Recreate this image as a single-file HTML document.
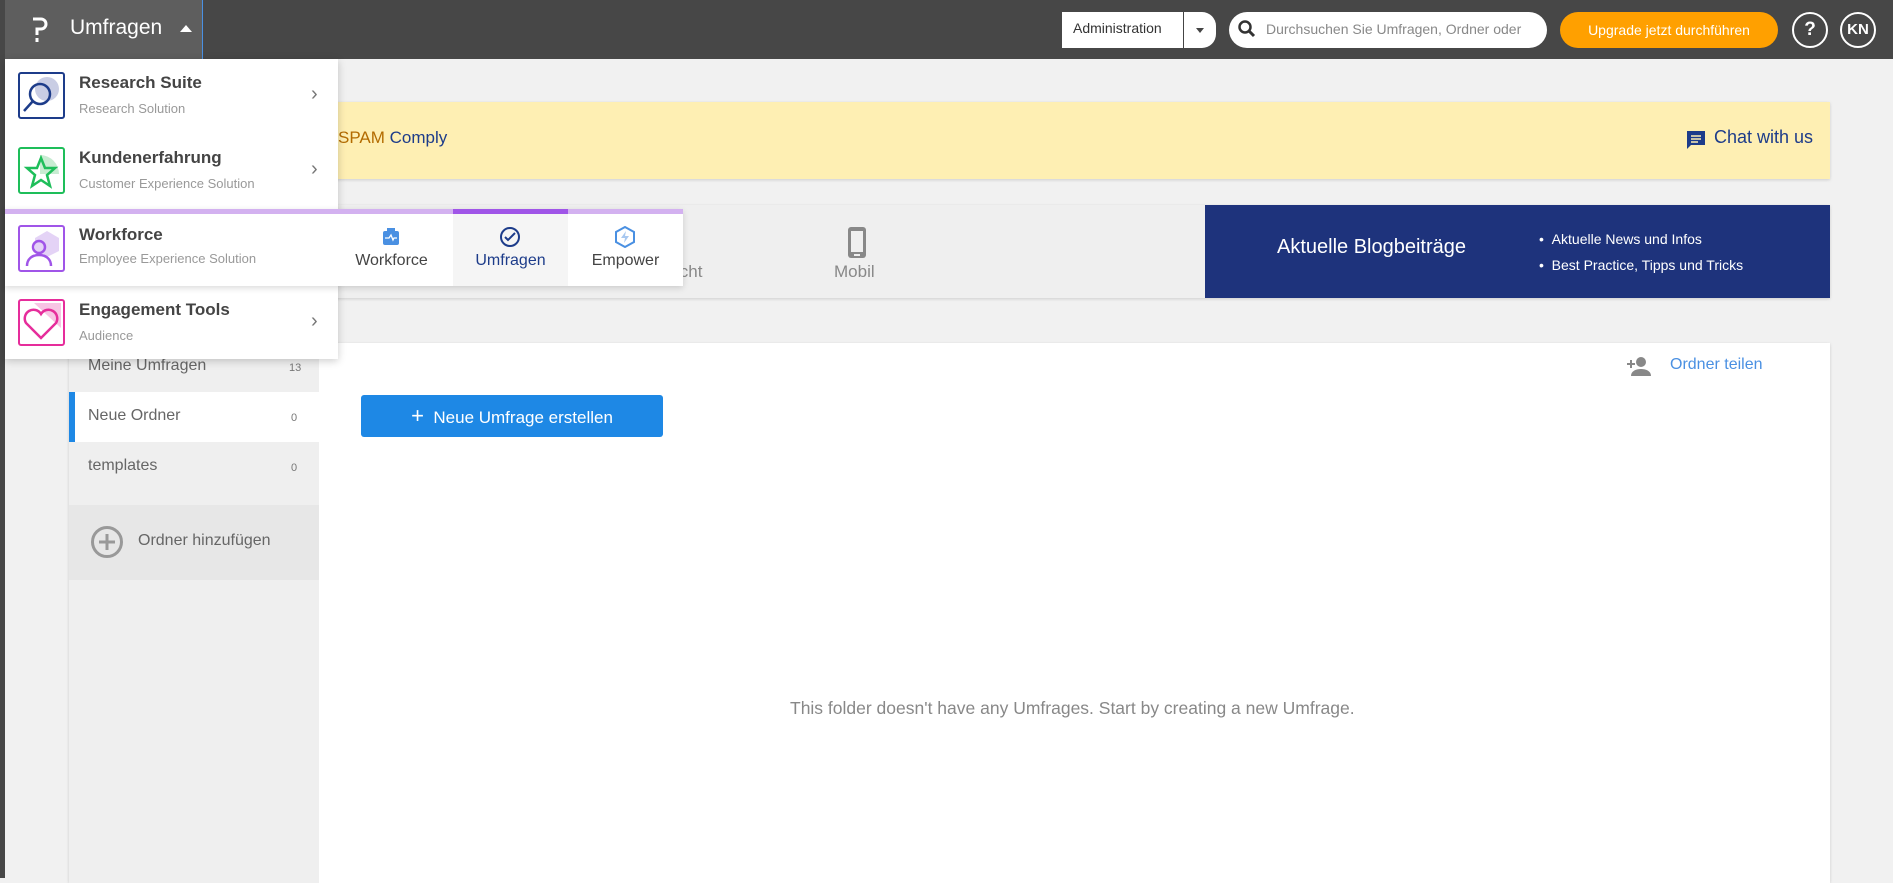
<!DOCTYPE html>
<html><head><meta charset="utf-8"><style>
*{box-sizing:border-box;margin:0;padding:0}
body{width:1893px;height:878px;overflow:hidden;background:#f1f1f1;font-family:"Liberation Sans",sans-serif;position:relative;color:#555}
.abs{position:absolute}
.top{left:0;top:0;width:1893px;height:59px;background:#474747}
.menu{left:5px;top:59px;width:333px;height:300px;background:#fff;box-shadow:0 2px 8px rgba(0,0,0,.2)}
.item{position:absolute;left:0;width:333px;height:75px}
.ic{position:absolute;left:13px;top:13px;width:47px;height:47px;border:2px solid;border-radius:3px}
.t1{position:absolute;left:74px;top:14px;font-size:17px;font-weight:bold;color:#444}
.t2{position:absolute;left:74px;top:42px;font-size:13px;color:#999}
.chev{position:absolute;left:306px;top:24px;font-size:20px;color:#777}
.st{position:absolute;top:43px;font-size:16px;text-align:center}
</style></head><body>
<div class="abs" style="left:0;top:0;width:5px;height:878px;background:#474747"></div>
<div class="abs top"></div>
<div class="abs" style="left:5px;top:0;width:198px;height:59px;background:#5e5e5e;border-right:1px solid #4a90e2"></div>
<svg class="abs" style="left:30px;top:15px" width="20" height="30" viewBox="0 0 20 30"><path d="M3 4h8a5 5 0 0 1 0 10H7v6" fill="none" stroke="#fff" stroke-width="3"/><rect x="5.5" y="23" width="3" height="4" fill="#fff"/></svg>
<div class="abs" style="left:70px;top:16px;color:#fff;font-size:21px">Umfragen</div>
<div class="abs" style="left:180px;top:25px;width:0;height:0;border-left:6px solid transparent;border-right:6px solid transparent;border-bottom:7px solid #fff"></div>

<div class="abs" style="left:1062px;top:12px;width:154px;height:36px;background:#fff;border-radius:0 14px 14px 0"></div>
<div class="abs" style="left:1073px;top:20px;font-size:14px;color:#333">Administration</div>
<div class="abs" style="left:1183px;top:12px;width:1px;height:36px;background:#444"></div>
<div class="abs" style="left:1196px;top:28px;border-left:4px solid transparent;border-right:4px solid transparent;border-top:5px solid #444"></div>
<div class="abs" style="left:1229px;top:12px;width:318px;height:36px;background:#fff;border-radius:18px"></div>
<svg class="abs" style="left:1237px;top:19px" width="20" height="20" viewBox="0 0 20 20"><circle cx="8" cy="8" r="5.5" fill="none" stroke="#333" stroke-width="2.5"/><path d="M12 12l5 5" stroke="#333" stroke-width="3"/></svg>
<div class="abs" style="left:1266px;top:21px;font-size:14px;color:#888;width:265px;overflow:hidden;white-space:nowrap">Durchsuchen Sie Umfragen, Ordner oder</div>
<div class="abs" style="left:1560px;top:12px;width:218px;height:36px;background:#ffa000;border-radius:18px;color:#fff;font-size:14px;text-align:center;line-height:36px">Upgrade jetzt durchführen</div>
<div class="abs" style="left:1792px;top:12px;width:36px;height:36px;border:2px solid #fff;border-radius:50%;color:#fff;font-weight:bold;font-size:19px;text-align:center;line-height:32px">?</div>
<div class="abs" style="left:1840px;top:12px;width:36px;height:36px;border:2px solid #fff;border-radius:50%;color:#fff;font-weight:bold;font-size:15px;text-align:center;line-height:32px">KN</div>

<div class="abs" style="left:69px;top:102px;width:1761px;height:77px;background:#feefb3;box-shadow:0 1px 3px rgba(0,0,0,.15)"></div>
<div class="abs" style="left:338px;top:128px;font-size:17px;color:#b36b00">SPAM <span style="color:#1d3c8a">Comply</span></div>
<svg class="abs" style="left:1685px;top:129px" width="22" height="22" viewBox="0 0 22 22"><path d="M2 2h18v14H6l-4 4z" fill="#1d3c8a"/><path d="M6 7h10M6 10h10M6 13h7" stroke="#feefb3" stroke-width="1.6"/></svg>
<div class="abs" style="left:1714px;top:127px;font-size:18px;color:#1d3c8a">Chat with us</div>

<div class="abs" style="left:69px;top:205px;width:1761px;height:93px;background:#efefef;box-shadow:0 1px 3px rgba(0,0,0,.15)"></div>
<div class="abs" style="left:676px;top:262px;font-size:17px;color:#888">icht</div>
<svg class="abs" style="left:846px;top:226px" width="22" height="33" viewBox="0 0 22 33"><rect x="2" y="1" width="18" height="31" rx="3" fill="#888"/><rect x="5" y="5" width="12" height="21" fill="#efefef"/><rect x="8" y="28" width="6" height="2" fill="#efefef"/></svg>
<div class="abs" style="left:834px;top:262px;font-size:17px;color:#888">Mobil</div>
<div class="abs" style="left:1205px;top:205px;width:625px;height:93px;background:#1e337c"></div>
<div class="abs" style="left:1277px;top:236px;font-size:20px;color:#fff">Aktuelle Blogbeiträge</div>
<div class="abs" style="left:1539px;top:226px;font-size:14px;color:#fff;line-height:26px">• &nbsp;Aktuelle News und Infos<br>• &nbsp;Best Practice, Tipps und Tricks</div>

<div class="abs" style="left:69px;top:343px;width:1761px;height:540px;background:#fff;box-shadow:0 1px 3px rgba(0,0,0,.15)"></div>
<div class="abs" style="left:69px;top:343px;width:250px;height:540px;background:#efefef"></div>
<div class="abs" style="left:88px;top:357px;font-size:16px;color:#666">Meine Umfragen</div>
<div class="abs" style="left:289px;top:362px;font-size:11px;color:#777">13</div>
<div class="abs" style="left:69px;top:392px;width:250px;height:50px;background:#fff;border-left:6px solid #1e88e5"></div>
<div class="abs" style="left:88px;top:407px;font-size:16px;color:#666">Neue Ordner</div>
<div class="abs" style="left:291px;top:412px;font-size:11px;color:#777">0</div>
<div class="abs" style="left:88px;top:457px;font-size:16px;color:#666">templates</div>
<div class="abs" style="left:291px;top:462px;font-size:11px;color:#777">0</div>
<div class="abs" style="left:69px;top:505px;width:250px;height:75px;background:#e7e7e7"></div>
<svg class="abs" style="left:90px;top:525px" width="34" height="34" viewBox="0 0 34 34"><circle cx="17" cy="17" r="14.5" fill="none" stroke="#999" stroke-width="3"/><path d="M17 9v16M9 17h16" stroke="#999" stroke-width="3"/></svg>
<div class="abs" style="left:138px;top:532px;font-size:16px;color:#666">Ordner hinzufügen</div>

<div class="abs" style="left:361px;top:395px;width:302px;height:42px;background:#1e88e5;border-radius:3px;color:#fff;font-size:17px;text-align:center;line-height:42px"><span style="font-size:22px">+</span>&nbsp; Neue Umfrage erstellen</div>
<svg class="abs" style="left:1626px;top:355px" width="26" height="22" viewBox="0 0 26 22"><circle cx="15" cy="7" r="5" fill="#888"/><path d="M5 21c0-5 5-7 10-7s10 2 10 7z" fill="#888"/><path d="M5 5v8M1 9h8" stroke="#888" stroke-width="2"/></svg>
<div class="abs" style="left:1670px;top:356px;font-size:16px;color:#4a90e2">Ordner teilen</div>
<div class="abs" style="left:790px;top:698px;font-size:17.5px;color:#888">This folder doesn't have any Umfrages. Start by creating a new Umfrage.</div>

<!-- dropdown -->
<div class="abs menu"></div>
<div class="abs" style="left:5px;top:59px;width:333px;height:300px">
 <div class="item" style="top:0">
  <div class="ic" style="border-color:#1d3c8a"><svg width="43" height="43" viewBox="0 0 43 43"><circle cx="27" cy="15" r="12" fill="#c9cde4"/><circle cx="20" cy="20" r="10" fill="none" stroke="#1d3c8a" stroke-width="2.5"/><path d="M13 27L4 37" stroke="#1d3c8a" stroke-width="2.5"/></svg></div>
  <div class="t1">Research Suite</div><div class="t2">Research Solution</div><div class="chev">›</div></div>
 <div class="item" style="top:75px">
  <div class="ic" style="border-color:#1ebe5a"><svg width="43" height="43" viewBox="0 0 43 43"><path d="M20 6a19 19 0 0 1 19 19H20z" fill="#c8ecd2"/><path d="M21 9l4 10h10l-8 7 3 11-9-6-9 6 3-11-8-7h10z" fill="none" stroke="#1ebe5a" stroke-width="2.5"/></svg></div>
  <div class="t1">Kundenerfahrung</div><div class="t2">Customer Experience Solution</div><div class="chev">›</div></div>
 <div class="item" style="top:150px;width:678px;height:77px;box-shadow:0 2px 6px rgba(0,0,0,.15);background:#fff">
  <div style="position:absolute;left:0;top:0;width:678px;height:5px;background:#d3b1f0"></div>
  <div style="position:absolute;left:448px;top:0;width:115px;height:5px;background:#a055e8"></div>
  <div style="position:absolute;left:448px;top:5px;width:115px;height:72px;background:#f5f5f5"></div>
  <div class="ic" style="border-color:#a055e8;top:16px"><svg width="43" height="43" viewBox="0 0 43 43"><path d="M27 4l12 7v13l-12 6-12-6V11z" fill="#e4d3f6"/><circle cx="19" cy="20" r="6" fill="none" stroke="#a055e8" stroke-width="2.5"/><path d="M7 39c0-7 5-11 12-11s12 4 12 11" fill="none" stroke="#a055e8" stroke-width="2.5"/></svg></div>
  <div class="t1" style="top:16px">Workforce</div><div class="t2" style="top:42px">Employee Experience Solution</div>
  <svg style="position:absolute;left:376px;top:18px" width="20" height="20" viewBox="0 0 20 20"><rect x="6" y="1" width="8" height="4" fill="#4a90e2"/><rect x="2" y="4" width="16" height="14" rx="2" fill="#4a90e2"/><path d="M4 11h4l2-3 2 5 1-2h3" stroke="#fff" stroke-width="1.3" fill="none"/></svg>
  <div class="st" style="left:325px;width:123px;color:#444">Workforce</div>
  <svg style="position:absolute;left:494px;top:17px" width="22" height="22" viewBox="0 0 22 22"><circle cx="11" cy="11" r="9" fill="none" stroke="#1d3c8a" stroke-width="2"/><path d="M6 11l3 3 7-7" stroke="#1d3c8a" stroke-width="2" fill="none"/></svg>
  <div class="st" style="left:448px;width:115px;color:#1d3c8a">Umfragen</div>
  <svg style="position:absolute;left:609px;top:17px" width="22" height="22" viewBox="0 0 22 22"><path d="M11 1l9 5v10l-9 5-9-5V6z" fill="none" stroke="#4a90e2" stroke-width="2"/><path d="M12 5l-5 7h4l-1 5 5-7h-4z" fill="#a8c8f0"/></svg>
  <div class="st" style="left:563px;width:115px;color:#444">Empower</div>
 </div>
 <div class="item" style="top:227px">
  <div class="ic" style="border-color:#e62d9b"><svg width="43" height="43" viewBox="0 0 43 43"><path d="M14 2h27v25z" fill="#f8c4e4"/><path d="M21 37L6 22a8 8 0 0 1 15-9 8 8 0 0 1 15 9z" fill="none" stroke="#e62d9b" stroke-width="2.5"/></svg></div>
  <div class="t1">Engagement Tools</div><div class="t2">Audience</div><div class="chev">›</div></div>
</div>
</body></html>
